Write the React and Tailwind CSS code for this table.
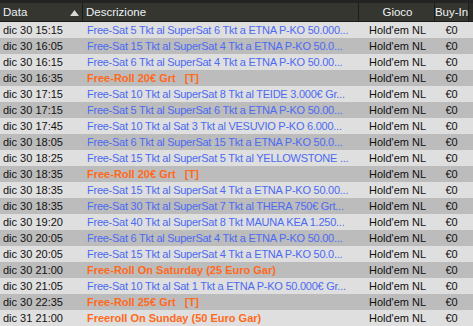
const rows = [
  ["dic 30 15:15", "Free-Sat 5 Tkt al SuperSat 6 Tkt a ETNA P-KO 50.000...", false],
  ["dic 30 16:05", "Free-Sat 15 Tkt al SuperSat 4 Tkt a ETNA P-KO 50.0...", false],
  ["dic 30 16:15", "Free-Sat 6 Tkt al SuperSat 4 Tkt a ETNA P-KO 50.00...", false],
  ["dic 30 16:35", "Free-Roll 20€ Grt\u00a0\u00a0\u00a0[T]", true],
  ["dic 30 17:15", "Free-Sat 10 Tkt al SuperSat 8 Tkt al TEIDE 3.000€ Gr...", false],
  ["dic 30 17:15", "Free-Sat 5 Tkt al SuperSat 6 Tkt a ETNA P-KO 50.00...", false],
  ["dic 30 17:45", "Free-Sat 10 Tkt al Sat 3 Tkt al VESUVIO P-KO 6.000...", false],
  ["dic 30 18:05", "Free-Sat 6 Tkt al SuperSat 15 Tkt a ETNA P-KO 50.0...", false],
  ["dic 30 18:25", "Free-Sat 15 Tkt al SuperSat 5 Tkt al YELLOWSTONE ...", false],
  ["dic 30 18:35", "Free-Roll 20€ Grt\u00a0\u00a0\u00a0[T]", true],
  ["dic 30 18:35", "Free-Sat 15 Tkt al SuperSat 4 Tkt a ETNA P-KO 50.00...", false],
  ["dic 30 18:35", "Free-Sat 30 Tkt al SuperSat 7 Tkt al THERA 750€ Grt...", false],
  ["dic 30 19:20", "Free-Sat 40 Tkt al SuperSat 8 Tkt MAUNA KEA 1.250...", false],
  ["dic 30 20:05", "Free-Sat 6 Tkt al SuperSat 4 Tkt a ETNA P-KO 50.00...", false],
  ["dic 30 20:05", "Free-Sat 15 Tkt al SuperSat 4 Tkt a ETNA P-KO 50.0...", false],
  ["dic 30 21:00", "Free-Roll On Saturday (25 Euro Gar)", true],
  ["dic 30 21:05", "Free-Sat 10 Tkt al Sat 1 Tkt a ETNA P-KO 50.000€ Gr...", false],
  ["dic 30 22:35", "Free-Roll 25€ Grt\u00a0\u00a0\u00a0[T]", true],
  ["dic 31 21:00", "Freeroll On Sunday (50 Euro Gar)", true],
];

export default function App() {
  return (
    <div className="w-[473px] h-[326px] overflow-hidden bg-[#dfdfdf] font-['Liberation_Sans',Arial,sans-serif] text-[11px] leading-none">
      {/* header */}
      <div className="flex h-[22px] whitespace-nowrap border-t-[3px] border-b border-t-[#232323] border-b-[#1b1b1b] bg-[#34362f] text-[11.5px] text-[#eef2f6]">
        <div className="flex w-[82px] items-center justify-between pl-[3px] pr-[2px] pt-[1px]">
          <span>Data</span>
          <svg width="9" height="6" viewBox="0 0 9 6" className="mr-[1px]">
            <path d="M4.5 0 L9 6 L0 6 Z" fill="#d8d8d8" />
          </svg>
        </div>
        <div className="flex w-[276px] items-center border-l border-l-[#1d1d1d] pl-[3px] pt-[1px]">Descrizione</div>
        <div className="flex w-[76px] items-center justify-center border-l border-l-[#1d1d1d] pl-[2px] pt-[1px]">Gioco</div>
        <div className="flex w-[35px] items-center justify-center border-l border-r border-l-[#1d1d1d] border-r-[#1d1d1d] pt-[1px]">Buy-In</div>
        <div className="flex-1 bg-[#2b2c28]" />
      </div>
      {rows.map(([date, desc, roll], i) => (
        <div
          key={i}
          className={
            "flex h-[16px] items-center whitespace-nowrap " +
            (i % 2 === 1 ? "bg-[#bcbcbc]" : "bg-[#dfdfdf]")
          }
        >
          <div className="w-[83px] pl-[3px] text-[#111]">{date}</div>
          <div
            className={
              "w-[275px] overflow-hidden pl-[4px] " +
              (roll ? "font-bold text-[#ff6a1c]" : "tracking-[-0.25px] text-[#4d6af2]")
            }
          >
            {desc}
          </div>
          <div className="w-[76px] pl-[3px] text-center text-[#111]">Hold'em NL</div>
          <div className="w-[35px] text-center text-[#111]">€0</div>
        </div>
      ))}
    </div>
  );
}
